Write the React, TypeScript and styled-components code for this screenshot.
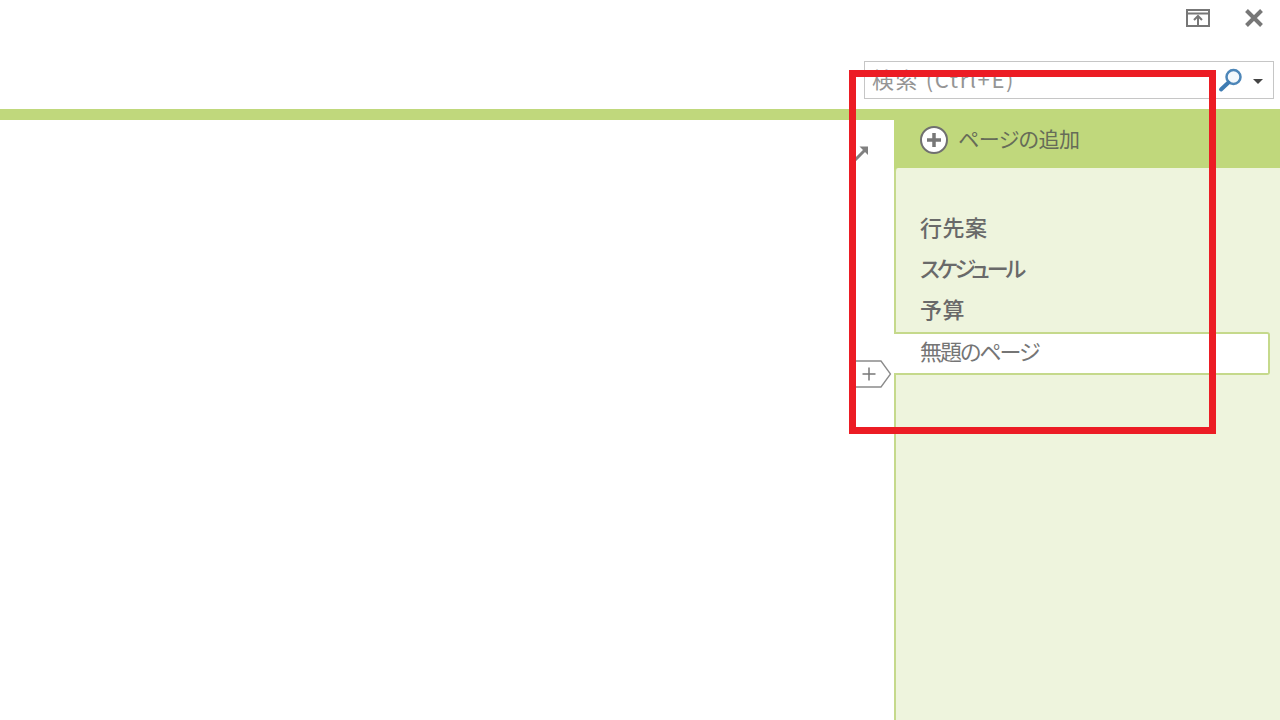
import React from 'react';
import styled, { createGlobalStyle } from 'styled-components';

const GlobalStyle = createGlobalStyle`
    html, body {
        margin: 0;
        padding: 0;
        background: #fff;
        overflow: hidden;
    }
`;

const pages = [
    { name: '行先案', tracking: 0.5 },
    { name: 'スケジュール', tracking: -3 },
    { name: '予算', tracking: 0.5 },
    { name: '無題のページ', tracking: -2, selected: true },
];

const App = () => {
    return (
        <Wrapper>
            <GlobalStyle />
            <Header>
                <WindowButtons>
                    <svg width="26" height="20" viewBox="0 0 26 20" fill="none" stroke="#777" strokeWidth="2">
                        <rect x="2" y="2" width="22" height="16" />
                        <path d="M2 5.5H24" />
                        <path d="M13 17V8.5M9 12L13 8L17 12" />
                    </svg>
                    <svg width="20" height="20" viewBox="0 0 20 20" fill="none" stroke="#777" strokeWidth="4">
                        <path d="M2.5 2.5L17.5 17.5M17.5 2.5L2.5 17.5" />
                    </svg>
                </WindowButtons>
                <SearchBox>
                    <Placeholder>検索 (Ctrl+E)</Placeholder>
                    <svg width="29" height="26" viewBox="0 0 29 26" fill="none">
                        <circle cx="17.5" cy="10" r="7" stroke="#4d86b8" strokeWidth="2.5" fill="#f3f8fc" />
                        <path d="M12.5 15.5L5 22.5" stroke="#3f7cb3" strokeWidth="4" strokeLinecap="round" />
                    </svg>
                    <Caret />
                </SearchBox>
            </Header>
            <Body>
                <Main>
                    <GreenStrip />
                    <Canvas>
                        <ExpandIcon width="16" height="16" viewBox="0 0 16 16" fill="none">
                            <path d="M2 15L13 4" stroke="#808080" strokeWidth="3" />
                            <path d="M6.5 1.5H15V10Z" fill="#808080" />
                        </ExpandIcon>
                    </Canvas>
                </Main>
                <Sidebar>
                    <AddPage>
                        <svg width="30" height="30" viewBox="0 0 30 30" fill="none">
                            <circle cx="15" cy="15" r="13" stroke="#707070" strokeWidth="2" fill="#fff" />
                            <path d="M15 8V22M8 15H22" stroke="#777" strokeWidth="3.5" />
                        </svg>
                        <AddLabel>ページの追加</AddLabel>
                    </AddPage>
                    <PageList>
                        {pages.map((page) => (
                            <PageRow key={page.name} selected={page.selected} tracking={page.tracking}>
                                {page.name}
                            </PageRow>
                        ))}
                        <InsertTab width="37" height="28" viewBox="0 0 37 28" fill="none">
                            <path d="M1 1H26L35.5 14L26 27H1" fill="#fff" stroke="#8a8a8a" strokeWidth="1.3" />
                            <path d="M14 7.5V20.5M7.5 14H20.5" stroke="#777" strokeWidth="1.5" />
                        </InsertTab>
                    </PageList>
                </Sidebar>
            </Body>
            <Highlight />
        </Wrapper>
    );
};

export default App;

const Wrapper = styled.div`
    position: relative;
    width: 1280px;
    height: 720px;
    display: flex;
    flex-direction: column;
    overflow: hidden;
    background: #fff;
    font-family: 'Noto Sans CJK JP', 'Noto Sans', sans-serif;
    font-feature-settings: 'palt';
`;

const Header = styled.div`
    height: 109px;
    display: flex;
    flex-direction: column;
    align-items: flex-end;
    flex-shrink: 0;
`;

const WindowButtons = styled.div`
    height: 61px;
    padding: 8px 16px 0 0;
    box-sizing: border-box;
    display: flex;
    align-items: flex-start;
    gap: 33px;
`;

const SearchBox = styled.div`
    width: 410px;
    height: 38px;
    margin-right: 6px;
    box-sizing: border-box;
    border: 1px solid #c6c6c6;
    display: flex;
    align-items: center;
    padding: 0 10px 0 7px;
`;

const Placeholder = styled.div`
    flex: 1;
    margin-top: -4px;
    font-size: 22px;
    letter-spacing: 1.6px;
    color: #959595;
    white-space: nowrap;
`;

const Caret = styled.div`
    width: 0;
    height: 0;
    margin-left: 8px;
    margin-top: 3px;
    border-left: 5px solid transparent;
    border-right: 5px solid transparent;
    border-top: 5px solid #444;
`;

const Body = styled.div`
    flex: 1;
    display: flex;
    min-height: 0;
`;

const Main = styled.div`
    width: 894px;
    display: flex;
    flex-direction: column;
`;

const GreenStrip = styled.div`
    height: 11px;
    background: #c0d87c;
`;

const Canvas = styled.div`
    position: relative;
    flex: 1;
    background: #fff;
`;

const ExpandIcon = styled.svg`
    position: absolute;
    top: 25px;
    right: 25px;
`;

const Sidebar = styled.div`
    flex: 1;
    display: flex;
    flex-direction: column;
    background: #c0d87c;
`;

const AddPage = styled.div`
    height: 59px;
    flex-shrink: 0;
    display: flex;
    align-items: center;
    gap: 9px;
    padding: 3px 0 0 25px;
    box-sizing: border-box;
`;

const AddLabel = styled.div`
    margin-top: -4px;
    font-size: 21px;
    letter-spacing: -0.5px;
    color: #666c58;
`;

const PageList = styled.div`
    position: relative;
    flex: 1;
    display: flex;
    flex-direction: column;
    padding-top: 41px;
    background: #eef4dd;
    border-left: 2px solid #c5d98b;
    border-top-left-radius: 4px;
`;

const PageRow = styled.div<{ selected?: boolean; tracking: number }>`
    height: ${(p) => (p.selected ? '43px' : '41px')};
    box-sizing: border-box;
    display: flex;
    align-items: center;
    padding: 0 0 8px 24px;
    font-size: 22px;
    font-weight: ${(p) => (p.selected ? 400 : 500)};
    letter-spacing: ${(p) => p.tracking}px;
    white-space: nowrap;
    color: ${(p) => (p.selected ? '#757575' : '#696969')};
    ${(p) =>
        p.selected &&
        `
        margin: 0 10px 0 -2px;
        padding-left: 26px;
        padding-bottom: 7px;
        background: #fff;
        border: 2px solid #c5d98b;
        border-left: none;
        border-radius: 0 3px 3px 0;
    `}
`;

const InsertTab = styled.svg`
    position: absolute;
    top: 192px;
    left: -41px;
`;

const Highlight = styled.div`
    position: absolute;
    left: 849px;
    top: 70px;
    width: 367px;
    height: 364px;
    box-sizing: border-box;
    border: 7px solid #ec1c24;
    pointer-events: none;
`;
